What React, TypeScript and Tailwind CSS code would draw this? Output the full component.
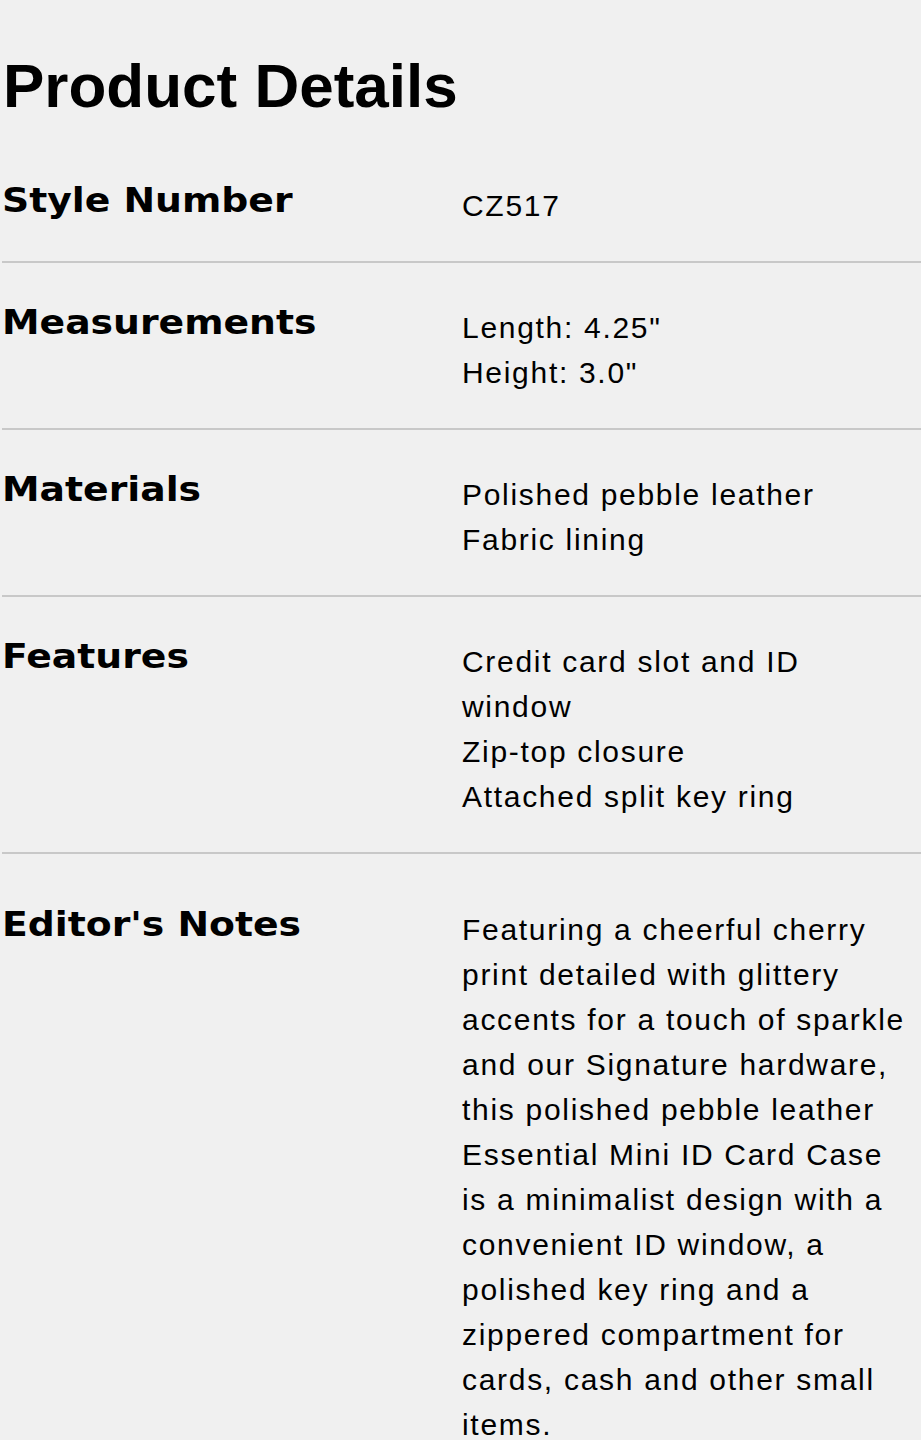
const details = [
  { label: 'Style Number', lines: ['CZ517'] },
  { label: 'Measurements', lines: ['Length: 4.25"', 'Height: 3.0"'] },
  { label: 'Materials', lines: ['Polished pebble leather', 'Fabric lining'] },
  {
    label: 'Features',
    lines: ['Credit card slot and ID window', 'Zip-top closure', 'Attached split key ring']
  }
]

const notes =
  'Featuring a cheerful cherry print detailed with glittery accents for a touch of sparkle and our Signature hardware, this polished pebble leather Essential Mini ID Card Case is a minimalist design with a convenient ID window, a polished key ring and a zippered compartment for cards, cash and other small items.'

const Label = ({ children }: { children: string }) => (
  <div className="w-[460px] shrink-0">
    <div className="origin-left scale-x-[1.11] whitespace-nowrap font-['DejaVu_Sans',sans-serif] font-bold text-[34px] leading-[34px] text-black">
      {children}
    </div>
  </div>
)

export default function App() {
  return (
    <div className="min-h-screen bg-[#f0f0f0] pl-[2px] font-['Liberation_Sans',Arial,sans-serif] text-black">
      <h1 className="pt-[50px] pl-[1px] text-[62px] leading-[72px] font-bold">Product Details</h1>

      <div className="mt-[19px]">
        {details.map((row) => (
          <div key={row.label}>
            <div className="flex pt-[42px] pb-[33px]">
              <Label>{row.label}</Label>
              <div className="w-[448px] text-[30px] leading-[45px] tracking-[1.7px]">
                {row.lines.map((line) => (
                  <div key={line}>{line}</div>
                ))}
              </div>
            </div>
            <div className="h-[2px] bg-[#c8c8c8]" />
          </div>
        ))}

        {/* Editor's notes */}
        <div className="flex pt-[53px]">
          <Label>Editor's Notes</Label>
          <p className="w-[448px] text-[30px] leading-[45px] tracking-[1.7px]">{notes}</p>
        </div>
      </div>
    </div>
  )
}
